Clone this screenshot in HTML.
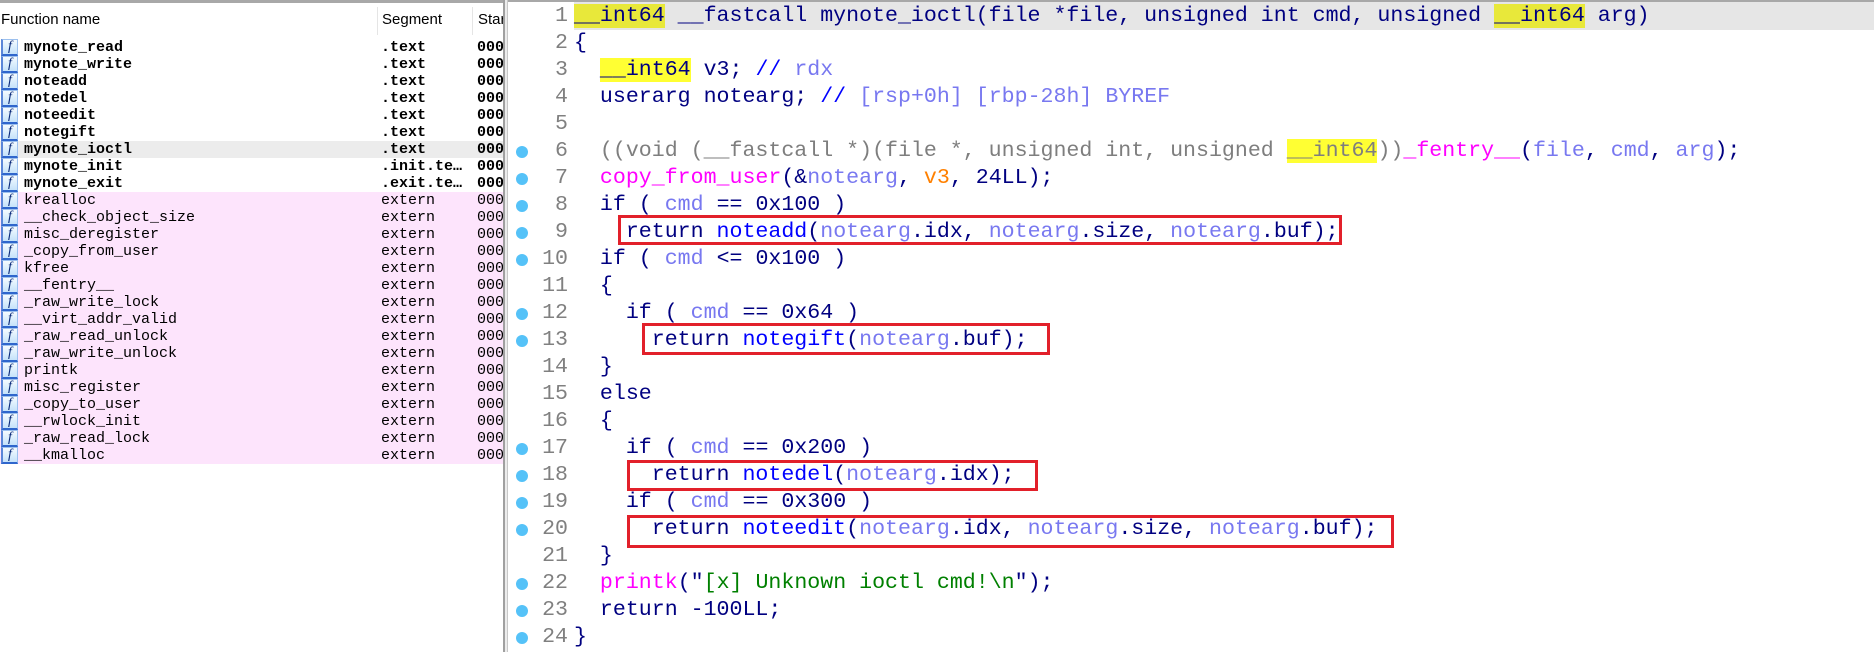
<!DOCTYPE html>
<html><head><meta charset="utf-8">
<style>
*{margin:0;padding:0;box-sizing:border-box}
html,body{width:1874px;height:652px;overflow:hidden;background:#fff;position:relative}
#left{position:absolute;left:0;top:0;width:503px;height:652px;background:#fff;overflow:hidden;border-top:3px solid #a8a8a8}
#left .hdr{position:absolute;top:0;left:0;width:503px;height:33px;font:15px "Liberation Sans",sans-serif;color:#000}
#left .hdr span{position:absolute;top:8px}
#left .sep{position:absolute;top:4px;width:1px;height:28px;background:#e5e5e5}
.row{position:absolute;left:0;width:503px;height:17px;font:15px/17px "Liberation Mono",monospace;color:#000;white-space:pre}
.row.b{font-weight:bold}
.row.ext{background:#fde4fc}
.row.sel{background:#ececec}
.row .ic{position:absolute;left:1px;top:0;width:17px;height:17px;background:linear-gradient(#f4fbff,#c4e2fa);border-left:2px solid #5a86d8;border-bottom:2px solid #2f66cc;border-top:1px solid #9cc0ee;border-right:1px solid #9cc0ee;font:italic 14px/14px "Liberation Serif",serif;color:#0a2a7a;text-align:center}
.row .n{position:absolute;left:24px}
.row .sg{position:absolute;left:381px}
.row .a{position:absolute;left:477px}
#vbar{position:absolute;left:503px;top:0;width:5px;height:652px;background:#ececec;border-left:2px solid #a0a0a0;border-right:1px solid #c8c8c8}
#code{position:absolute;left:508px;top:0;right:0;height:652px;border-top:2px solid #a8a8a8}
.ln{position:absolute;left:0;width:1366px;height:27px;font:21.6px/27px "Liberation Mono",monospace;color:#000080;white-space:pre}
.ln .num{position:absolute;right:1306px;color:#808080;width:40px;text-align:right}
.ln .dot{position:absolute;left:8px;top:8px;width:12px;height:12px;border-radius:50%;background:#55c2f8}
.ln .t{position:absolute;left:66px}
.v{color:#7878f0}.g{color:#7e7e7e}.m{color:#ff00ff}.o{color:#ff8000}.f{color:#0000ff}.s{color:#008000}.c{color:#0000ff}
.y{background:#ffff33}.y2{background:#e8e83a}
.box{position:absolute;border:3px solid #e2202a}
</style></head><body>
<div id="left">
<div class="hdr"><span style="left:1px">Function name</span><span style="left:382px">Segment</span><span style="left:478px">Start</span></div>
<div class="sep" style="left:377px"></div><div class="sep" style="left:472px"></div>
<div class="row b" style="top:36px"><span class="ic">f</span><span class="n">mynote_read</span><span class="sg">.text</span><span class="a">000</span></div>
<div class="row b" style="top:53px"><span class="ic">f</span><span class="n">mynote_write</span><span class="sg">.text</span><span class="a">000</span></div>
<div class="row b" style="top:70px"><span class="ic">f</span><span class="n">noteadd</span><span class="sg">.text</span><span class="a">000</span></div>
<div class="row b" style="top:87px"><span class="ic">f</span><span class="n">notedel</span><span class="sg">.text</span><span class="a">000</span></div>
<div class="row b" style="top:104px"><span class="ic">f</span><span class="n">noteedit</span><span class="sg">.text</span><span class="a">000</span></div>
<div class="row b" style="top:121px"><span class="ic">f</span><span class="n">notegift</span><span class="sg">.text</span><span class="a">000</span></div>
<div class="row b sel" style="top:138px"><span class="ic">f</span><span class="n">mynote_ioctl</span><span class="sg">.text</span><span class="a">000</span></div>
<div class="row b" style="top:155px"><span class="ic">f</span><span class="n">mynote_init</span><span class="sg">.init.te…</span><span class="a">000</span></div>
<div class="row b" style="top:172px"><span class="ic">f</span><span class="n">mynote_exit</span><span class="sg">.exit.te…</span><span class="a">000</span></div>
<div class="row ext" style="top:189px"><span class="ic">f</span><span class="n">krealloc</span><span class="sg">extern</span><span class="a">0000</span></div>
<div class="row ext" style="top:206px"><span class="ic">f</span><span class="n">__check_object_size</span><span class="sg">extern</span><span class="a">0000</span></div>
<div class="row ext" style="top:223px"><span class="ic">f</span><span class="n">misc_deregister</span><span class="sg">extern</span><span class="a">0000</span></div>
<div class="row ext" style="top:240px"><span class="ic">f</span><span class="n">_copy_from_user</span><span class="sg">extern</span><span class="a">0000</span></div>
<div class="row ext" style="top:257px"><span class="ic">f</span><span class="n">kfree</span><span class="sg">extern</span><span class="a">0000</span></div>
<div class="row ext" style="top:274px"><span class="ic">f</span><span class="n">__fentry__</span><span class="sg">extern</span><span class="a">0000</span></div>
<div class="row ext" style="top:291px"><span class="ic">f</span><span class="n">_raw_write_lock</span><span class="sg">extern</span><span class="a">0000</span></div>
<div class="row ext" style="top:308px"><span class="ic">f</span><span class="n">__virt_addr_valid</span><span class="sg">extern</span><span class="a">0000</span></div>
<div class="row ext" style="top:325px"><span class="ic">f</span><span class="n">_raw_read_unlock</span><span class="sg">extern</span><span class="a">0000</span></div>
<div class="row ext" style="top:342px"><span class="ic">f</span><span class="n">_raw_write_unlock</span><span class="sg">extern</span><span class="a">0000</span></div>
<div class="row ext" style="top:359px"><span class="ic">f</span><span class="n">printk</span><span class="sg">extern</span><span class="a">0000</span></div>
<div class="row ext" style="top:376px"><span class="ic">f</span><span class="n">misc_register</span><span class="sg">extern</span><span class="a">0000</span></div>
<div class="row ext" style="top:393px"><span class="ic">f</span><span class="n">_copy_to_user</span><span class="sg">extern</span><span class="a">0000</span></div>
<div class="row ext" style="top:410px"><span class="ic">f</span><span class="n">__rwlock_init</span><span class="sg">extern</span><span class="a">0000</span></div>
<div class="row ext" style="top:427px"><span class="ic">f</span><span class="n">_raw_read_lock</span><span class="sg">extern</span><span class="a">0000</span></div>
<div class="row ext" style="top:444px"><span class="ic">f</span><span class="n">__kmalloc</span><span class="sg">extern</span><span class="a">0000</span></div>
</div>
<div id="vbar"></div>
<div id="code">
<div style="position:absolute;left:66px;top:0;right:0;height:28px;background:#e6e6e6"></div>
<div class="ln" style="top:1px"><span class="num">1</span><span class="t"><span class="y2">__int64</span> __fastcall mynote_ioctl(file *file, unsigned int cmd, unsigned <span class="y2">__int64</span> arg)</span></div>
<div class="ln" style="top:28px"><span class="num">2</span><span class="t">{</span></div>
<div class="ln" style="top:55px"><span class="num">3</span><span class="t">  <span class="y">__int64</span> v3; <span class="c">//</span> <span class="v">rdx</span></span></div>
<div class="ln" style="top:82px"><span class="num">4</span><span class="t">  userarg notearg; <span class="c">//</span> <span class="v">[rsp+0h] [rbp-28h] BYREF</span></span></div>
<div class="ln" style="top:109px"><span class="num">5</span><span class="t"></span></div>
<div class="ln" style="top:136px"><span class="dot"></span><span class="num">6</span><span class="t">  <span class="g">((void (__fastcall *)(file *, unsigned int, unsigned <span class="y">__int64</span>))</span><span class="m">_fentry__</span>(<span class="v">file</span>, <span class="v">cmd</span>, <span class="v">arg</span>);</span></div>
<div class="ln" style="top:163px"><span class="dot"></span><span class="num">7</span><span class="t">  <span class="m">copy_from_user</span>(&amp;<span class="v">notearg</span>, <span class="o">v3</span>, 24LL);</span></div>
<div class="ln" style="top:190px"><span class="dot"></span><span class="num">8</span><span class="t">  if ( <span class="v">cmd</span> == 0x100 )</span></div>
<div class="ln" style="top:217px"><span class="dot"></span><span class="num">9</span><span class="t">    return <span class="f">noteadd</span>(<span class="v">notearg</span>.idx, <span class="v">notearg</span>.size, <span class="v">notearg</span>.buf);</span></div>
<div class="ln" style="top:244px"><span class="dot"></span><span class="num">10</span><span class="t">  if ( <span class="v">cmd</span> &lt;= 0x100 )</span></div>
<div class="ln" style="top:271px"><span class="num">11</span><span class="t">  {</span></div>
<div class="ln" style="top:298px"><span class="dot"></span><span class="num">12</span><span class="t">    if ( <span class="v">cmd</span> == 0x64 )</span></div>
<div class="ln" style="top:325px"><span class="dot"></span><span class="num">13</span><span class="t">      return <span class="f">notegift</span>(<span class="v">notearg</span>.buf);</span></div>
<div class="ln" style="top:352px"><span class="num">14</span><span class="t">  }</span></div>
<div class="ln" style="top:379px"><span class="num">15</span><span class="t">  else</span></div>
<div class="ln" style="top:406px"><span class="num">16</span><span class="t">  {</span></div>
<div class="ln" style="top:433px"><span class="dot"></span><span class="num">17</span><span class="t">    if ( <span class="v">cmd</span> == 0x200 )</span></div>
<div class="ln" style="top:460px"><span class="dot"></span><span class="num">18</span><span class="t">      return <span class="f">notedel</span>(<span class="v">notearg</span>.idx);</span></div>
<div class="ln" style="top:487px"><span class="dot"></span><span class="num">19</span><span class="t">    if ( <span class="v">cmd</span> == 0x300 )</span></div>
<div class="ln" style="top:514px"><span class="dot"></span><span class="num">20</span><span class="t">      return <span class="f">noteedit</span>(<span class="v">notearg</span>.idx, <span class="v">notearg</span>.size, <span class="v">notearg</span>.buf);</span></div>
<div class="ln" style="top:541px"><span class="num">21</span><span class="t">  }</span></div>
<div class="ln" style="top:568px"><span class="dot"></span><span class="num">22</span><span class="t">  <span class="m">printk</span>("<span class="s">[x] Unknown ioctl cmd!\n</span>");</span></div>
<div class="ln" style="top:595px"><span class="dot"></span><span class="num">23</span><span class="t">  return -100LL;</span></div>
<div class="ln" style="top:622px"><span class="dot"></span><span class="num">24</span><span class="t">}</span></div>
</div>
<div class="box" style="left:618px;top:215px;width:724px;height:30px"></div>
<div class="box" style="left:642px;top:323px;width:408px;height:32px"></div>
<div class="box" style="left:627px;top:460px;width:411px;height:31px"></div>
<div class="box" style="left:627px;top:515px;width:767px;height:33px"></div>
</body></html>
